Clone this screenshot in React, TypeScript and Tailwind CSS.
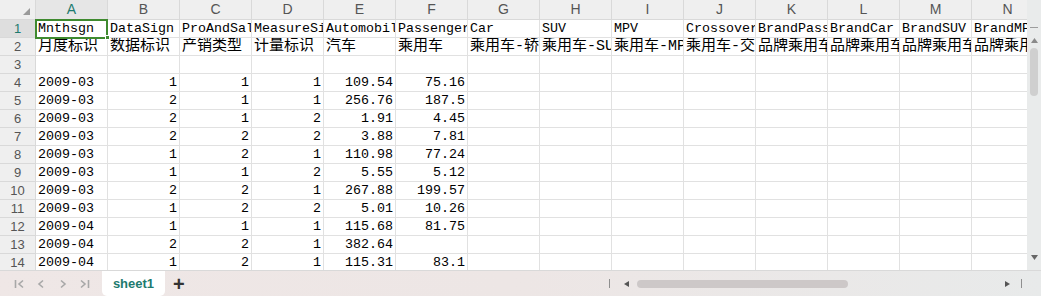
import React from "react";

const COLS = ["A", "B", "C", "D", "E", "F", "G", "H", "I", "J", "K", "L", "M", "N"];

const HEAD_EN = [
  "Mnthsgn",
  "DataSign",
  "ProAndSales",
  "MeasureSign",
  "Automobile",
  "Passenger",
  "Car",
  "SUV",
  "MPV",
  "Crossover",
  "BrandPassenger",
  "BrandCar",
  "BrandSUV",
  "BrandMPV",
];

const HEAD_CN = [
  "月度标识",
  "数据标识",
  "产销类型",
  "计量标识",
  "汽车",
  "乘用车",
  "乘用车-轿车",
  "乘用车-SUV",
  "乘用车-MPV",
  "乘用车-交叉型",
  "品牌乘用车",
  "品牌乘用车轿车",
  "品牌乘用车SUV",
  "品牌乘用车MPV",
];

const DATA: (string | number)[][] = [
  ["2009-03", 1, 1, 1, "109.54", "75.16"],
  ["2009-03", 2, 1, 1, "256.76", "187.5"],
  ["2009-03", 2, 1, 2, "1.91", "4.45"],
  ["2009-03", 2, 2, 2, "3.88", "7.81"],
  ["2009-03", 1, 2, 1, "110.98", "77.24"],
  ["2009-03", 1, 1, 2, "5.55", "5.12"],
  ["2009-03", 2, 2, 1, "267.88", "199.57"],
  ["2009-03", 1, 2, 2, "5.01", "10.26"],
  ["2009-04", 1, 1, 1, "115.68", "81.75"],
  ["2009-04", 2, 2, 1, "382.64", ""],
  ["2009-04", 1, 2, 1, "115.31", "83.1"],
];

const mono = "font-['Liberation_Mono','Noto_Sans_CJK_SC',monospace]";
const sans = "font-['Liberation_Sans','Noto_Sans',sans-serif]";

function RowNum({ n, active }: { n: number; active?: boolean }) {
  return (
    <div
      className={`flex h-[18px] w-[36px] shrink-0 items-center justify-center border-r border-b border-[#d9d9d9] text-[13px] ${sans} ${
        active ? "bg-[#dedede] text-[#1d7a6e]" : "bg-[#efefef] text-[#555]"
      }`}
    >
      {n}
    </div>
  );
}

function Cell({ children, right, cn }: { children?: React.ReactNode; right?: boolean; cn?: boolean }) {
  return (
    <div
      className={`flex h-[18px] w-[72px] shrink-0 items-center overflow-hidden whitespace-nowrap border-r border-b border-[#e1e1e1] bg-white px-[2px] leading-none text-black ${
        right ? "justify-end" : "justify-start"
      } ${cn ? "text-[15px]" : "text-[13.33px]"} ${mono}`}
    >
      {children}
    </div>
  );
}

export default function App() {
  const rows: React.ReactNode[] = [];

  rows.push(
    <div key="r1" className="relative flex">
      <RowNum n={1} active />
      {HEAD_EN.map((t, i) => (
        <Cell key={i}>{t}</Cell>
      ))}
      <div className="pointer-events-none absolute left-[35px] top-[-1px] h-[20px] w-[73px] border-2 border-[#3f8a2f]" />
      <div className="pointer-events-none absolute left-[105px] top-[15px] h-[5px] w-[5px] border border-white bg-[#3f8a2f]" />
    </div>
  );
  rows.push(
    <div key="r2" className="flex">
      <RowNum n={2} />
      {HEAD_CN.map((t, i) => (
        <Cell key={i} cn>
          {t}
        </Cell>
      ))}
    </div>
  );
  rows.push(
    <div key="r3" className="flex">
      <RowNum n={3} />
      {COLS.map((c) => (
        <Cell key={c} />
      ))}
    </div>
  );
  DATA.forEach((d, ri) => {
    rows.push(
      <div key={"d" + ri} className="flex">
        <RowNum n={ri + 4} />
        {COLS.map((c, ci) => (
          <Cell key={c} right={ci > 0}>
            {ci < d.length ? d[ci] : ""}
          </Cell>
        ))}
      </div>
    );
  });

  return (
    <div className="flex h-[296px] w-[1041px] flex-col overflow-hidden bg-white">
      <div className="flex h-[270px] shrink-0 overflow-hidden">
        <div className="min-w-0 flex-1 overflow-hidden">
          <div className="flex">
            <div className="relative h-[20px] w-[36px] shrink-0 border-r border-b border-[#d9d9d9] bg-[#efefef]">
              <svg className="absolute bottom-[4px] right-[5px]" width="7" height="7" viewBox="0 0 7 7">
                <polygon points="7,0 7,7 0,7" fill="#9a9a9a" />
              </svg>
            </div>
            {COLS.map((c, i) => (
              <div
                key={c}
                className={`flex h-[20px] w-[72px] shrink-0 items-center justify-center border-r border-b border-[#d9d9d9] text-[14px] ${sans} ${
                  i === 0 ? "bg-[#e6e6e6] text-[#1d7a6e]" : "bg-[#efefef] text-[#555]"
                }`}
              >
                {c}
              </div>
            ))}
          </div>
          {rows}
        </div>
        <div className="flex w-[14px] shrink-0 flex-col items-center bg-[#e9ebeb] pt-[27px]">
          <div className="h-[1px] w-[8px] bg-[#9c9c9c]" />
          <svg className="mt-[10px]" width="7" height="5" viewBox="0 0 7 5">
            <polygon points="3.5,0 7,5 0,5" fill="#8a8a8a" />
          </svg>
          <div className="mt-[5px] h-[48px] w-[8px] rounded-full bg-[#cfcfcf]" />
          <div className="flex-1" />
          <svg className="mb-[10px]" width="7" height="5" viewBox="0 0 7 5">
            <polygon points="0,0 7,0 3.5,5" fill="#666" />
          </svg>
        </div>
      </div>
      <div
        className={`flex h-[26px] w-[1041px] shrink-0 items-center border-t border-[#d9d9d9] bg-gradient-to-r from-[#efe7e6] via-[#ede6e5] to-[#e8eaea] ${sans}`}
      >
        <div className="flex w-[90px] shrink-0 items-center gap-[12px] pl-[14px]">
          <svg width="10" height="10" viewBox="0 0 10 10">
            <path d="M1.5 1v8M9 1.5 5 5l4 3.5" stroke="#a8a8a8" strokeWidth="1.6" fill="none" />
          </svg>
          <svg width="10" height="10" viewBox="0 0 10 10">
            <path d="M7 1.5 3 5l4 3.5" stroke="#a8a8a8" strokeWidth="1.6" fill="none" />
          </svg>
          <svg width="10" height="10" viewBox="0 0 10 10">
            <path d="M3 1.5 7 5l-4 3.5" stroke="#a8a8a8" strokeWidth="1.6" fill="none" />
          </svg>
          <svg width="10" height="10" viewBox="0 0 10 10">
            <path d="M1 1.5 5 5l-4 3.5M8.5 1v8" stroke="#a8a8a8" strokeWidth="1.6" fill="none" />
          </svg>
        </div>
        <div className="ml-[12px] flex h-[25px] w-[63px] shrink-0 items-center justify-center self-start rounded-b-[5px] bg-white text-[13px] font-bold text-[#1d7a6e]">
          sheet1
        </div>
        <div className="ml-[8px] w-[12px] shrink-0 text-[20px] font-bold leading-none text-[#333]">+</div>
        <div className="h-[1px] w-[424px] shrink-0" />
        <div className="h-[9px] w-[1px] shrink-0 bg-[#8f8f8f]" />
        <svg className="ml-[14px] shrink-0" width="5" height="6" viewBox="0 0 5 6">
          <polygon points="5,0 5,6 0,3" fill="#555" />
        </svg>
        <div className="ml-[8px] h-[8px] w-[211px] shrink-0 rounded-full bg-[#cdc8c8]" />
        <div className="h-[1px] w-[157px] shrink-0" />
        <svg className="shrink-0" width="5" height="6" viewBox="0 0 5 6">
          <polygon points="0,0 5,3 0,6" fill="#555" />
        </svg>
        <div className="ml-[11px] h-[9px] w-[1px] shrink-0 bg-[#8f8f8f]" />
      </div>
    </div>
  );
}
